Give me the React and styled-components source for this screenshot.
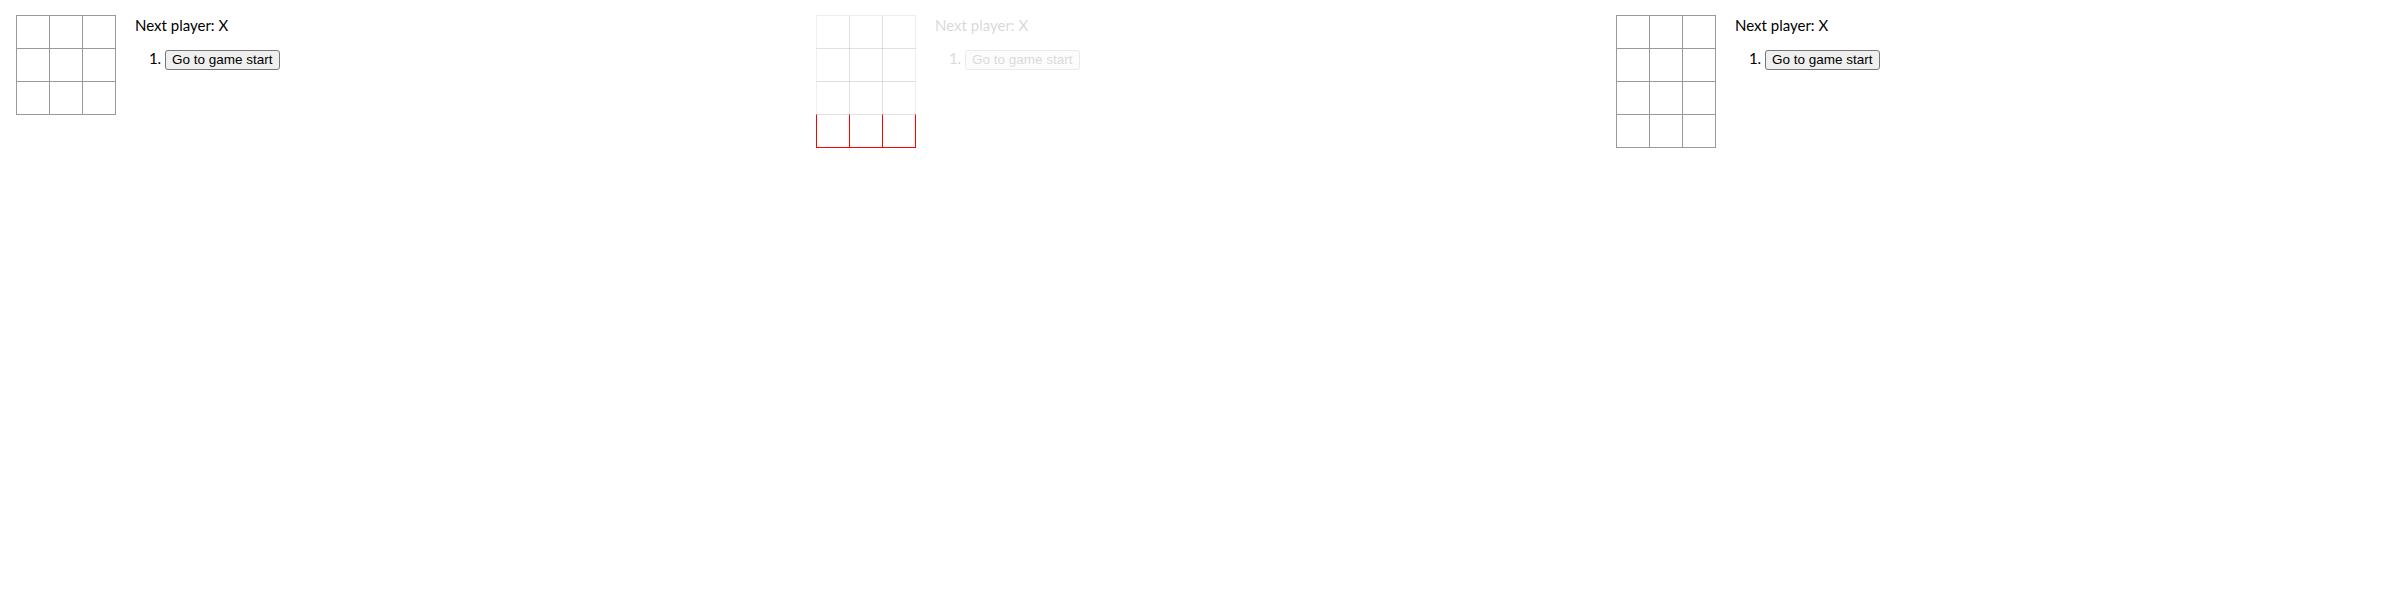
import React from 'react';
import styled, { createGlobalStyle } from 'styled-components';

const GlobalStyle = createGlobalStyle`
	html, body {
		margin: 0;
		padding: 0;
		background: #fff;
	}
	body {
		font: 15px Lato, "DejaVu Sans", sans-serif;
	}
`;

const Strip = styled.div`
	display: flex;
	flex-direction: row;
	width: 2400px;
`;

const Panel = styled.div`
	box-sizing: border-box;
	display: flex;
	flex-direction: row;
	align-items: flex-start;
	width: 800px;
	padding: 16px;
`;

const BoardGrid = styled.div`
	display: flex;
	flex-direction: column;
`;

const BoardRow = styled.div`
	display: flex;
	flex-direction: row;
`;

const Square = styled.button`
	box-sizing: border-box;
	width: 34px;
	height: 34px;
	margin: -1px -1px 0 0;
	padding: 0;
	background: #fff;
	border: 1px solid ${props => (props.added ? '#f00' : '#999')};
	border-top-color: ${props => (props.added ? '#f0f0f0' : '#999')};
	opacity: ${props => (props.faded ? 0.15 : 1)};
	font-size: 24px;
	font-weight: bold;
	line-height: 34px;
`;

const Info = styled.div`
	margin-left: 20px;
	opacity: ${props => (props.faded ? 0.15 : 1)};
`;

const Status = styled.div`
	color: #000;
	font-size: 15px;
	line-height: 18px;
`;

const Moves = styled.ol`
	margin: 14px 0;
	padding-left: 30px;
	font-size: 15px;
	line-height: 20px;
`;

const MoveButton = styled.button`
	font: 13.5px "Liberation Sans", Arial, sans-serif;
	height: 20px;
	padding: 1px 6px;
	color: #000;
	background: #efefef;
	border: 1px solid #767676;
	border-radius: 3px;
`;

function Board({ rows, faded, addedRows = 0 }) {
	const total = rows + addedRows;
	return (
		<BoardGrid>
			{Array.from({ length: total }).map((_, r) => (
				<BoardRow key={r}>
					{[0, 1, 2].map(c =>
						r >= rows ? (
							<Square key={c} added />
						) : (
							<Square key={c} faded={faded} />
						)
					)}
				</BoardRow>
			))}
		</BoardGrid>
	);
}

function Game({ rows, faded, addedRows }) {
	return (
		<Panel>
			<Board rows={rows} faded={faded} addedRows={addedRows} />
			<Info faded={faded}>
				<Status>Next player: X</Status>
				<Moves>
					<li>
						<MoveButton>Go to game start</MoveButton>
					</li>
				</Moves>
			</Info>
		</Panel>
	);
}

export default function App() {
	return (
		<>
			<GlobalStyle />
			<Strip>
				<Game rows={3} />
				<Game rows={3} faded addedRows={1} />
				<Game rows={4} />
			</Strip>
		</>
	);
}
